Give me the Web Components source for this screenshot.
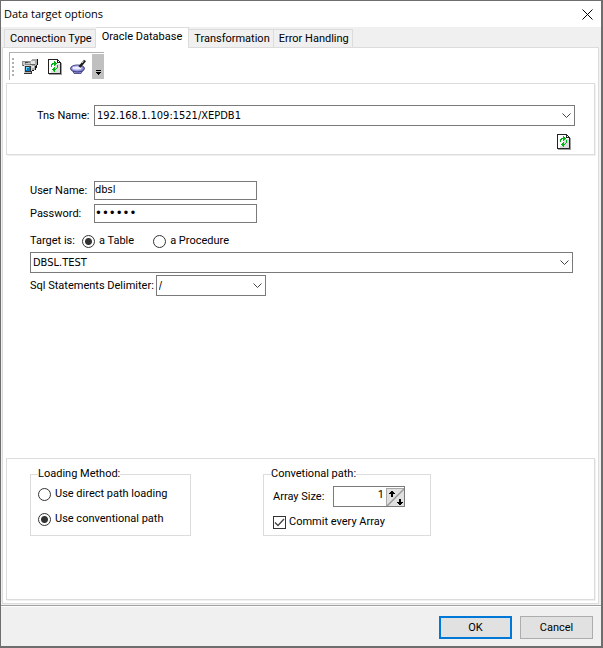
<!DOCTYPE html>
<html lang="en">
<head>
<meta charset="utf-8">
<title>Data target options</title>
<style>
  body {
    margin: 0;
    min-height: 100vh;
    display: flex;
    background: #f0f0f0;
    color: #000;
    font: 11px/16px Roboto, "Liberation Sans", sans-serif;
    --value-font: 11px/16px "DejaVu Sans Condensed", "DejaVu Sans", sans-serif;
    --title-font: 11px/16px "Open Sans", "Noto Sans", sans-serif;
    --line: #dcdcdc;
    --field-line: #7a7a7a;
  }
  dialog-window { flex: 1; }
  .connection {
    display: grid;
    row-gap: 8px;
    padding: 21px 19px 4px 30px;
  }
  .connection combo-box { --label-width: 55px; }
  .connection icon-button { justify-self: end; margin-right: 4px; }
  .target {
    display: flex;
    flex-direction: column;
    align-items: flex-start;
    flex: 1;
    padding: 26px 22px 0 24px;
  }
  .target text-field { margin-bottom: 4px; }
  .target radio-group { margin: 6px 0 3px; }
  .target .table { align-self: stretch; margin-bottom: 2px; }
  .target .delimiter { --select-width: 110px; }
  .loading {
    display: flex;
    align-items: flex-start;
    gap: 72px;
    padding: 7px 23px 63px;
  }
  .loading .method { flex: 0 0 161px; }
  .loading .path { flex: 0 0 168px; }
</style>
</head>
<body>

<dialog-window heading="Data target options">
  <tab-pages tabs="Connection Type|Oracle Database|Transformation|Error Handling" selected="1">
    <tool-bar>
      <icon-button icon="computers" label="Connect"></icon-button>
      <icon-button icon="refresh" label="Refresh"></icon-button>
      <icon-button icon="lens" label="Preview"></icon-button>
    </tool-bar>
    <bevel-panel>
      <div class="connection">
        <combo-box label="Tns Name:" value="192.168.1.109:1521/XEPDB1"></combo-box>
        <icon-button icon="refresh" label="Reload names"></icon-button>
      </div>
    </bevel-panel>
    <div class="target">
      <text-field label="User Name:" value="dbsl"></text-field>
      <text-field label="Password:" type="password" value="secret"></text-field>
      <radio-group label="Target is:" options="a Table|a Procedure" selected="0"></radio-group>
      <combo-box class="table" label="Target" hide-label value="DBSL.TEST"></combo-box>
      <combo-box class="delimiter" label="Sql Statements Delimiter:" value="/"></combo-box>
    </div>
    <bevel-panel>
      <div class="loading">
        <group-box class="method" caption="Loading Method:">
          <radio-group vertical options="Use direct path loading|Use conventional path" selected="1"></radio-group>
        </group-box>
        <group-box class="path" caption="Convetional path:">
          <spin-field label="Array Size:" value="1"></spin-field>
          <check-option label="Commit every Array" checked></check-option>
        </group-box>
      </div>
    </bevel-panel>
  </tab-pages>
  <push-button slot="actions" primary>OK</push-button>
  <push-button slot="actions">Cancel</push-button>
</dialog-window>

<script>
const icons = {
  refresh: `
    <svg width="16" height="16" viewBox="-1 0 16 16" shape-rendering="crispEdges">
      <path fill="#a0a0a0" d="M2 15h13v1H2zM14 4h1v12h-1z"/>
      <path fill="#222" d="M1 0h10v1h1v1h1v1h1v12H1z"/>
      <path fill="#fff" d="M2 1h8v3h3v10H2z"/>
      <path fill="#dedede" d="M8 5h5v9H4v-2h4z"/>
      <path fill="#fff" d="M11 2h1v1h-1z"/>
      <path fill="#00b414" d="M7 2h1v1h1v1h1v1H9v1H8v1H7V5H6v1H5v2H4V5h1V4h2zM10 6h1v3h-1v1H9v1H8v2H7v-1H6v-1H5v-1h1V9h1V8h1v2h1V9h1z"/>
    </svg>`,
  computers: `
    <svg width="16" height="16" viewBox="0 0 16 16" shape-rendering="crispEdges">
      <path fill="#8c8c8c" d="M0 2h9v5H0z"/>
      <path fill="#c8c8c8" d="M1 3h2v3H1zM4 4h4v1H4z"/>
      <path fill="#444" d="M1 6h3v1H1zM3 3h3v1H3z"/>
      <path fill="#aaa" d="M9 1h1V0h5v7h-1v4H8V2h1z"/>
      <path fill="#e4e4e4" d="M9 2h4v3H9zM9 7h3v2H9z"/>
      <path fill="#666" d="M8 5h5v1H8z"/>
      <path fill="#111" d="M15 0h1v6h-1v3h-1v2h-2v1h-2v-1h3V7h1V6h1z"/>
      <path fill="#333" d="M2 6h8v9H2z"/>
      <path fill="#d4d4d4" d="M2 6h8v1H3v7H2zM9 7h1v5H9z"/>
      <path fill="#0878c8" d="M4 8h4v4H4z"/>
      <path fill="#5fd4ff" d="M4 8h3v1H5v2H4z"/>
      <path fill="#bbb" d="M3 13h6v1H3z"/>
    </svg>`,
  lens: `
    <svg width="16" height="16" viewBox="0 0 16 16">
      <path fill="#9b9be4" stroke="#555598" d="M2.500 11L4 14.500h7l2-3.500z"/>
      <ellipse cx="7.500" cy="9.500" rx="7" ry="3.500" fill="#8888d8" stroke="#33336c"/>
      <ellipse cx="7" cy="9" rx="5" ry="2" fill="#eeeefc" stroke="#b0b0ee"/>
      <path d="M9.500 8L15 1.500" stroke="#1c1c1c" stroke-width="2.600"/>
      <path d="M12 4l1.500-1.800" stroke="#ccc"/>
    </svg>`
};

const attach = (element, html) => {
  const template = document.createElement('template');
  template.innerHTML = html;
  element.attachShadow({ mode: 'open' }).appendChild(template.content.cloneNode(true));
};

class DialogWindow extends HTMLElement {
  constructor() {
    super();
    attach(this, `
      <style>
        :host {
          display: flex;
          flex-direction: column;
          box-sizing: border-box;
          border: solid #6e6e6e;
          border-width: 1px 2px 2px 1px;
        }
        header {
          display: flex;
          justify-content: space-between;
          align-items: center;
          height: 26px;
          padding: 0 8px 0 3px;
          background: #fff;
          font: var(--title-font);
        }
        h1 { margin: 0; font: inherit; }
        header button {
          display: flex;
          padding: 0;
          border: 0;
          background: none;
        }
        main {
          display: flex;
          flex: 1;
          padding: 0 2px 1px 1px;
        }
        footer {
          display: flex;
          justify-content: flex-end;
          gap: 8px;
          padding: 10px 8px 7px;
          border-top: 1px solid #a0a0a0;
          box-shadow: inset 0 1px #fff;
        }
      </style>
      <header>
        <h1></h1>
        <button aria-label="Close">
          <svg width="11" height="11" viewBox="0 0 11 11"><path d="M.5.5l10 10M10.5.5l-10 10" stroke="#000" fill="none"/></svg>
        </button>
      </header>
      <main><slot></slot></main>
      <footer><slot name="actions"></slot></footer>
    `);
  }

  connectedCallback() {
    this.shadowRoot.querySelector('h1').textContent = this.getAttribute('heading');
  }
}
customElements.define('dialog-window', DialogWindow);

class TabPages extends HTMLElement {
  constructor() {
    super();
    attach(this, `
      <style>
        :host {
          display: flex;
          flex-direction: column;
          flex: 1;
        }
        [role=tablist] {
          display: flex;
          align-items: flex-end;
          height: 20px;
          padding-left: 2px;
        }
        button {
          box-sizing: border-box;
          height: 18px;
          padding: 0 3px 0 5px;
          border: 1px solid var(--line);
          border-width: 1px 1px 0 0;
          background: #f0f0f0;
          color: inherit;
          font: inherit;
        }
        button:first-child { border-left-width: 1px; }
        button[aria-selected=true] {
          height: 21px;
          margin-bottom: -1px;
          padding: 0 6px 3px;
          background: #fff;
          z-index: 1;
        }
        [role=tabpanel] {
          display: flex;
          flex-direction: column;
          flex: 1;
          padding: 4px 3px 3px;
          border: 1px solid var(--line);
          background: #fff;
        }
      </style>
      <div role="tablist"></div>
      <div role="tabpanel"><slot></slot></div>
    `);
  }

  connectedCallback() {
    const list = this.shadowRoot.querySelector('[role=tablist]');
    this.getAttribute('tabs').split('|').forEach((name, i) => {
      const tab = document.createElement('button');
      tab.setAttribute('role', 'tab');
      tab.setAttribute('aria-selected', i === Number(this.getAttribute('selected')));
      tab.textContent = name;
      tab.addEventListener('click', () => {
        list.querySelector('[aria-selected=true]').setAttribute('aria-selected', false);
        tab.setAttribute('aria-selected', true);
      });
      list.appendChild(tab);
    });
  }
}
customElements.define('tab-pages', TabPages);

class ToolBar extends HTMLElement {
  constructor() {
    super();
    attach(this, `
      <style>
        :host {
          display: flex;
          align-self: flex-start;
          align-items: center;
          gap: 8px;
          height: 27px;
          margin: 0 0 3px 3px;
          padding-left: 2px;
          border: solid #b0b0b0;
          border-width: 1px 0 0 1px;
        }
        .grip {
          width: 2px;
          height: 18px;
          background: repeating-linear-gradient(#b0b0b0 0 2px, #fff 2px 4px);
        }
        button {
          display: flex;
          align-items: flex-end;
          justify-content: center;
          width: 12px;
          height: 25px;
          margin-left: -2px;
          padding: 0 0 4px;
          border: 0;
          background: #c0c0c0;
        }
      </style>
      <span class="grip"></span>
      <slot></slot>
      <button aria-label="More">
        <svg width="5" height="5" viewBox="0 0 5 5" shape-rendering="crispEdges"><path d="M0 0h5v1H0zM0 2h5v1H4v1H3v1H2V4H1V3H0z"/></svg>
      </button>
    `);
  }
}
customElements.define('tool-bar', ToolBar);

class IconButton extends HTMLElement {
  constructor() {
    super();
    attach(this, `
      <style>
        :host { display: block; }
        button {
          display: flex;
          padding: 0;
          border: 0;
          background: none;
        }
      </style>
      <button></button>
    `);
  }

  connectedCallback() {
    const button = this.shadowRoot.querySelector('button');
    button.setAttribute('aria-label', this.getAttribute('label'));
    button.innerHTML = icons[this.getAttribute('icon')];
  }
}
customElements.define('icon-button', IconButton);

class BevelPanel extends HTMLElement {
  constructor() {
    super();
    attach(this, `
      <style>
        :host {
          display: block;
          border: 1px solid var(--line);
          box-shadow: 1px 1px #f0f0f0;
        }
      </style>
      <slot></slot>
    `);
  }
}
customElements.define('bevel-panel', BevelPanel);

class ComboBox extends HTMLElement {
  constructor() {
    super();
    attach(this, `
      <style>
        :host {
          display: flex;
          align-items: center;
          gap: 2px;
        }
        :host([hide-label]) label { display: none; }
        label { flex: none; min-width: var(--label-width, 0); }
        .box {
          display: grid;
          flex: 1 0 var(--select-width, 0);
          align-items: center;
        }
        select {
          grid-area: 1 / 1;
          appearance: none;
          box-sizing: border-box;
          width: 100%;
          height: 21px;
          margin: 0;
          padding: 0 2px;
          border: 1px solid var(--field-line);
          border-radius: 0;
          background: #fff;
          color: #000;
          font: var(--value-font);
        }
        svg {
          grid-area: 1 / 1;
          justify-self: end;
          margin-right: 4px;
          pointer-events: none;
        }
      </style>
      <label for="list"></label>
      <div class="box">
        <select id="list"><option></option></select>
        <svg width="9" height="6" viewBox="0 0 9 6"><path d="M.5.5l4 4 4-4" fill="none" stroke="#444"/></svg>
      </div>
    `);
  }

  connectedCallback() {
    this.shadowRoot.querySelector('label').textContent = this.getAttribute('label');
    this.shadowRoot.querySelector('option').textContent = this.getAttribute('value');
  }
}
customElements.define('combo-box', ComboBox);

class TextField extends HTMLElement {
  constructor() {
    super();
    attach(this, `
      <style>
        :host { display: flex; align-items: center; }
        label { width: 64px; }
        input {
          box-sizing: border-box;
          width: 163px;
          height: 19px;
          padding: 0 0 2px;
          border: 1px solid var(--field-line);
          font: var(--value-font);
        }
        input[type=password] { font-size: 13px; }
      </style>
      <label for="field"></label>
      <input id="field">
    `);
  }

  connectedCallback() {
    const input = this.shadowRoot.querySelector('input');
    this.shadowRoot.querySelector('label').textContent = this.getAttribute('label');
    input.type = this.getAttribute('type') || 'text';
    input.value = this.getAttribute('value');
  }
}
customElements.define('text-field', TextField);

class RadioGroup extends HTMLElement {
  constructor() {
    super();
    attach(this, `
      <style>
        :host { display: block; }
        input {
          appearance: none;
          box-sizing: border-box;
          flex: none;
          width: 13px;
          height: 13px;
          margin: 0;
          border: 1px solid #333;
          border-radius: 50%;
          background: #fff;
        }
        input:checked { background: radial-gradient(circle, #333 3px, #fff 4px); }
        .group { display: flex; align-items: center; }
        .caption:not(:empty) { width: 52px; }
        .options { display: flex; gap: 19px; }
        :host([vertical]) .options { flex-direction: column; gap: 9px; }
        label { display: flex; align-items: center; gap: 4px; }
      </style>
      <div class="group" role="radiogroup">
        <span class="caption"></span>
        <div class="options"></div>
      </div>
    `);
  }

  connectedCallback() {
    const options = this.shadowRoot.querySelector('.options');
    this.shadowRoot.querySelector('.caption').textContent = this.getAttribute('label') || '';
    this.getAttribute('options').split('|').forEach((name, i) => {
      const label = document.createElement('label');
      const input = document.createElement('input');
      input.type = 'radio';
      input.name = 'option';
      input.checked = i === Number(this.getAttribute('selected'));
      label.append(input, name);
      options.appendChild(label);
    });
  }
}
customElements.define('radio-group', RadioGroup);

class GroupBox extends HTMLElement {
  constructor() {
    super();
    attach(this, `
      <style>
        :host { display: block; }
        fieldset {
          box-sizing: border-box;
          height: 70px;
          margin: 0;
          padding: 4px 7px 0;
          border: 1px solid var(--line);
        }
        legend { padding: 0; }
      </style>
      <fieldset>
        <legend></legend>
        <slot></slot>
      </fieldset>
    `);
  }

  connectedCallback() {
    this.shadowRoot.querySelector('legend').textContent = this.getAttribute('caption');
  }
}
customElements.define('group-box', GroupBox);

class SpinField extends HTMLElement {
  constructor() {
    super();
    attach(this, `
      <style>
        :host {
          display: flex;
          align-items: center;
          padding-left: 2px;
        }
        label { width: 60px; }
        .box {
          display: flex;
          box-sizing: border-box;
          width: 72px;
          height: 21px;
          border: 1px solid var(--field-line);
        }
        input {
          flex: 1;
          min-width: 0;
          padding: 0 2px 4px 0;
          border: 0;
          font: inherit;
          text-align: right;
        }
        button {
          display: flex;
          padding: 1px 0 0;
          border: 0;
          background: none;
        }
      </style>
      <label for="count"></label>
      <div class="box">
        <input id="count">
        <button aria-label="Change value">
          <svg width="18" height="18" viewBox="0 0 18 18">
            <path d="M0 0h18v18H0z" fill="#e0e0e0"/>
            <path d="M0 18V0h18" fill="none" stroke="#a8a8a8" stroke-width="2"/>
            <path d="M1 18L18 1" stroke="#999" stroke-width="1.500"/>
            <path d="M5 3h2v1h1v1h1v1H7v3H5V6H3V5h1V4h1zM13 11h2v3h2v1h-1v1h-1v1h-2v-1h-1v-1h-1v-1h2z" shape-rendering="crispEdges"/>
          </svg>
        </button>
      </div>
    `);
  }

  connectedCallback() {
    this.shadowRoot.querySelector('label').textContent = this.getAttribute('label');
    this.shadowRoot.querySelector('input').value = this.getAttribute('value');
  }
}
customElements.define('spin-field', SpinField);

class CheckOption extends HTMLElement {
  constructor() {
    super();
    attach(this, `
      <style>
        :host { display: block; padding: 7px 0 0 2px; }
        label { display: flex; align-items: center; gap: 3px; }
        .box { display: grid; place-items: center; }
        input {
          grid-area: 1 / 1;
          appearance: none;
          box-sizing: border-box;
          width: 13px;
          height: 13px;
          margin: 0;
          border: 1px solid #333;
          background: #fff;
        }
        svg { grid-area: 1 / 1; visibility: hidden; pointer-events: none; }
        input:checked + svg { visibility: visible; }
      </style>
      <label>
        <span class="box">
          <input type="checkbox">
          <svg width="11" height="9" viewBox="0 0 11 9"><path d="M1 4.500l3 3 6-6.500" fill="none" stroke="#444" stroke-width="1.300"/></svg>
        </span>
        <span class="text"></span>
      </label>
    `);
  }

  connectedCallback() {
    this.shadowRoot.querySelector('.text').textContent = this.getAttribute('label');
    this.shadowRoot.querySelector('input').checked = this.hasAttribute('checked');
  }
}
customElements.define('check-option', CheckOption);

class PushButton extends HTMLElement {
  constructor() {
    super();
    attach(this, `
      <style>
        :host { display: block; }
        button {
          box-sizing: border-box;
          width: 73px;
          height: 23px;
          padding: 0;
          border: 1px solid #adadad;
          background: #e1e1e1;
          color: inherit;
          font: inherit;
        }
        :host([primary]) button { border: 2px solid #0078d7; }
      </style>
      <button><slot></slot></button>
    `);
  }
}
customElements.define('push-button', PushButton);
</script>
</body>
</html>
